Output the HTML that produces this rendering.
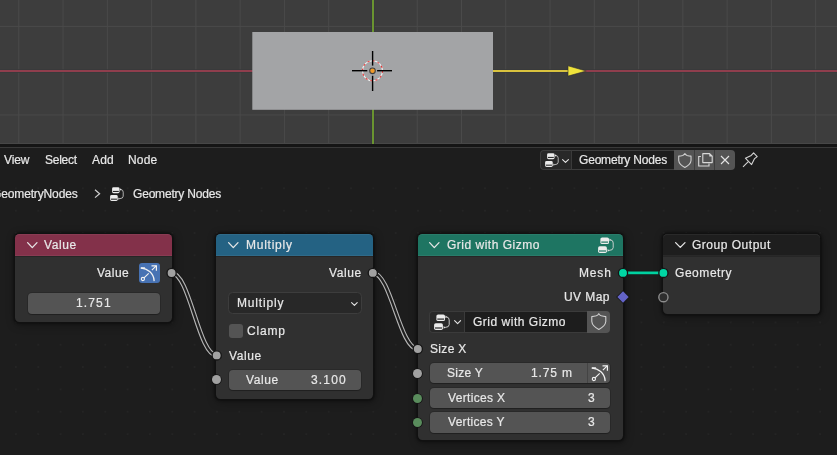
<!DOCTYPE html>
<html><head><meta charset="utf-8">
<style>
*{margin:0;padding:0;box-sizing:border-box}
html,body{width:837px;height:455px;overflow:hidden;background:#1d1d1d;font-family:"Liberation Sans",sans-serif;color:#e0e0e0;font-size:12px}
.abs{position:absolute}
.t{position:absolute;will-change:transform;white-space:nowrap;line-height:14px;font-size:12px;color:#e8e8e8;-webkit-text-stroke:0.2px #e8e8e8}
.node{position:absolute;background:#303030;border-radius:4.5px;box-shadow:0 0 0 1px #111,0 0 2px 1.5px rgba(0,0,0,.3),1px 2px 8px 1px rgba(0,0,0,.35)}
.hdr{position:absolute;left:0;top:0;right:0;height:22px;border-radius:4.5px 4.5px 0 0;box-shadow:0 1px 0 rgba(0,0,0,.2),inset 0 1px 0 rgba(255,255,255,.05),inset 0 -1px 0 rgba(255,255,255,.05)}
.field{position:absolute;background:#545454;border-radius:4px;box-shadow:0 0 0 1px rgba(0,0,0,.14),0 1px 1px rgba(0,0,0,.22)}
.sock{position:absolute;width:9px;height:9px;border-radius:50%;background:#a1a1a1;box-shadow:0 0 0 0.8px #151515}
</style></head>
<body>
<svg class="abs" style="left:0;top:0" width="837" height="144">
  <rect width="837" height="144" fill="#3d3d3d"/>
  <g stroke="#4a4a4a" stroke-width="1"><line x1="18.80" y1="0" x2="18.80" y2="144"/><line x1="63.07" y1="0" x2="63.07" y2="144"/><line x1="107.34" y1="0" x2="107.34" y2="144"/><line x1="151.61" y1="0" x2="151.61" y2="144"/><line x1="195.88" y1="0" x2="195.88" y2="144"/><line x1="240.15" y1="0" x2="240.15" y2="144"/><line x1="284.42" y1="0" x2="284.42" y2="144"/><line x1="328.69" y1="0" x2="328.69" y2="144"/><line x1="417.23" y1="0" x2="417.23" y2="144"/><line x1="461.50" y1="0" x2="461.50" y2="144"/><line x1="505.77" y1="0" x2="505.77" y2="144"/><line x1="550.04" y1="0" x2="550.04" y2="144"/><line x1="594.31" y1="0" x2="594.31" y2="144"/><line x1="638.58" y1="0" x2="638.58" y2="144"/><line x1="682.85" y1="0" x2="682.85" y2="144"/><line x1="727.12" y1="0" x2="727.12" y2="144"/><line x1="771.39" y1="0" x2="771.39" y2="144"/><line x1="815.66" y1="0" x2="815.66" y2="144"/><line x1="0" y1="26.4" x2="837" y2="26.4"/><line x1="0" y1="114.95" x2="837" y2="114.95"/></g>
  <rect x="0" y="143" width="837" height="1" fill="#474747"/>
  <line x1="0" y1="71" x2="837" y2="71" stroke="#383a3b" stroke-width="3.4"/><line x1="0" y1="71" x2="837" y2="71" stroke="#8f3e4d" stroke-width="2"/>
  <line x1="373" y1="0" x2="373" y2="144" stroke="#3a3a3e" stroke-width="3.4"/><line x1="373" y1="0" x2="373" y2="144" stroke="#6a9430" stroke-width="2"/>
  <rect x="252.3" y="32" width="240.7" height="77.8" fill="#a3a4a6"/>
  <line x1="493" y1="71" x2="570" y2="71" stroke="#d9c23e" stroke-width="2"/>
  <polygon points="568,65.8 586.2,71 568,76.1" fill="#efe33b" stroke="#2e2e30" stroke-width="0.6" stroke-linejoin="round"/>
  <circle cx="372.5" cy="70.8" r="10" fill="none" stroke="#f4f4f4" stroke-width="1.05"/>
  <circle cx="372.5" cy="70.8" r="10" fill="none" stroke="#e83030" stroke-width="1.05" stroke-dasharray="2.2 3"/>
  <g stroke="#000" stroke-width="1.4">
    <line x1="352" y1="70.7" x2="367.3" y2="70.7"/>
    <line x1="377.1" y1="70.7" x2="392" y2="70.7"/>
    <line x1="372.6" y1="51" x2="372.6" y2="65.6"/>
    <line x1="372.6" y1="75.8" x2="372.6" y2="91"/>
  </g>
  <circle cx="372.5" cy="70.8" r="2.8" fill="#f09a2a" stroke="#404040" stroke-width="1.1"/>
</svg>
<div class="abs" style="left:0;top:144px;width:837px;height:3px;background:#151515"></div>
<div class="abs" style="left:0;top:147px;width:837px;height:1px;background:#393939"></div>
<svg class="abs" style="left:0;top:0" width="837" height="455"><g fill="#242424"><rect x="14.9" y="187.3" width="2" height="2"/><rect x="14.9" y="209.7" width="2" height="2"/><rect x="14.9" y="232.0" width="2" height="2"/><rect x="14.9" y="254.3" width="2" height="2"/><rect x="14.9" y="276.7" width="2" height="2"/><rect x="14.9" y="299.0" width="2" height="2"/><rect x="14.9" y="321.4" width="2" height="2"/><rect x="14.9" y="343.7" width="2" height="2"/><rect x="14.9" y="366.0" width="2" height="2"/><rect x="14.9" y="388.4" width="2" height="2"/><rect x="14.9" y="410.7" width="2" height="2"/><rect x="14.9" y="433.1" width="2" height="2"/><rect x="37.2" y="187.3" width="2" height="2"/><rect x="37.2" y="209.7" width="2" height="2"/><rect x="37.2" y="232.0" width="2" height="2"/><rect x="37.2" y="254.3" width="2" height="2"/><rect x="37.2" y="276.7" width="2" height="2"/><rect x="37.2" y="299.0" width="2" height="2"/><rect x="37.2" y="321.4" width="2" height="2"/><rect x="37.2" y="343.7" width="2" height="2"/><rect x="37.2" y="366.0" width="2" height="2"/><rect x="37.2" y="388.4" width="2" height="2"/><rect x="37.2" y="410.7" width="2" height="2"/><rect x="37.2" y="433.1" width="2" height="2"/><rect x="59.6" y="187.3" width="2" height="2"/><rect x="59.6" y="209.7" width="2" height="2"/><rect x="59.6" y="232.0" width="2" height="2"/><rect x="59.6" y="254.3" width="2" height="2"/><rect x="59.6" y="276.7" width="2" height="2"/><rect x="59.6" y="299.0" width="2" height="2"/><rect x="59.6" y="321.4" width="2" height="2"/><rect x="59.6" y="343.7" width="2" height="2"/><rect x="59.6" y="366.0" width="2" height="2"/><rect x="59.6" y="388.4" width="2" height="2"/><rect x="59.6" y="410.7" width="2" height="2"/><rect x="59.6" y="433.1" width="2" height="2"/><rect x="81.9" y="187.3" width="2" height="2"/><rect x="81.9" y="209.7" width="2" height="2"/><rect x="81.9" y="232.0" width="2" height="2"/><rect x="81.9" y="254.3" width="2" height="2"/><rect x="81.9" y="276.7" width="2" height="2"/><rect x="81.9" y="299.0" width="2" height="2"/><rect x="81.9" y="321.4" width="2" height="2"/><rect x="81.9" y="343.7" width="2" height="2"/><rect x="81.9" y="366.0" width="2" height="2"/><rect x="81.9" y="388.4" width="2" height="2"/><rect x="81.9" y="410.7" width="2" height="2"/><rect x="81.9" y="433.1" width="2" height="2"/><rect x="104.3" y="187.3" width="2" height="2"/><rect x="104.3" y="209.7" width="2" height="2"/><rect x="104.3" y="232.0" width="2" height="2"/><rect x="104.3" y="254.3" width="2" height="2"/><rect x="104.3" y="276.7" width="2" height="2"/><rect x="104.3" y="299.0" width="2" height="2"/><rect x="104.3" y="321.4" width="2" height="2"/><rect x="104.3" y="343.7" width="2" height="2"/><rect x="104.3" y="366.0" width="2" height="2"/><rect x="104.3" y="388.4" width="2" height="2"/><rect x="104.3" y="410.7" width="2" height="2"/><rect x="104.3" y="433.1" width="2" height="2"/><rect x="126.6" y="187.3" width="2" height="2"/><rect x="126.6" y="209.7" width="2" height="2"/><rect x="126.6" y="232.0" width="2" height="2"/><rect x="126.6" y="254.3" width="2" height="2"/><rect x="126.6" y="276.7" width="2" height="2"/><rect x="126.6" y="299.0" width="2" height="2"/><rect x="126.6" y="321.4" width="2" height="2"/><rect x="126.6" y="343.7" width="2" height="2"/><rect x="126.6" y="366.0" width="2" height="2"/><rect x="126.6" y="388.4" width="2" height="2"/><rect x="126.6" y="410.7" width="2" height="2"/><rect x="126.6" y="433.1" width="2" height="2"/><rect x="148.9" y="187.3" width="2" height="2"/><rect x="148.9" y="209.7" width="2" height="2"/><rect x="148.9" y="232.0" width="2" height="2"/><rect x="148.9" y="254.3" width="2" height="2"/><rect x="148.9" y="276.7" width="2" height="2"/><rect x="148.9" y="299.0" width="2" height="2"/><rect x="148.9" y="321.4" width="2" height="2"/><rect x="148.9" y="343.7" width="2" height="2"/><rect x="148.9" y="366.0" width="2" height="2"/><rect x="148.9" y="388.4" width="2" height="2"/><rect x="148.9" y="410.7" width="2" height="2"/><rect x="148.9" y="433.1" width="2" height="2"/><rect x="171.3" y="187.3" width="2" height="2"/><rect x="171.3" y="209.7" width="2" height="2"/><rect x="171.3" y="232.0" width="2" height="2"/><rect x="171.3" y="254.3" width="2" height="2"/><rect x="171.3" y="276.7" width="2" height="2"/><rect x="171.3" y="299.0" width="2" height="2"/><rect x="171.3" y="321.4" width="2" height="2"/><rect x="171.3" y="343.7" width="2" height="2"/><rect x="171.3" y="366.0" width="2" height="2"/><rect x="171.3" y="388.4" width="2" height="2"/><rect x="171.3" y="410.7" width="2" height="2"/><rect x="171.3" y="433.1" width="2" height="2"/><rect x="193.6" y="187.3" width="2" height="2"/><rect x="193.6" y="209.7" width="2" height="2"/><rect x="193.6" y="232.0" width="2" height="2"/><rect x="193.6" y="254.3" width="2" height="2"/><rect x="193.6" y="276.7" width="2" height="2"/><rect x="193.6" y="299.0" width="2" height="2"/><rect x="193.6" y="321.4" width="2" height="2"/><rect x="193.6" y="343.7" width="2" height="2"/><rect x="193.6" y="366.0" width="2" height="2"/><rect x="193.6" y="388.4" width="2" height="2"/><rect x="193.6" y="410.7" width="2" height="2"/><rect x="193.6" y="433.1" width="2" height="2"/><rect x="216.0" y="187.3" width="2" height="2"/><rect x="216.0" y="209.7" width="2" height="2"/><rect x="216.0" y="232.0" width="2" height="2"/><rect x="216.0" y="254.3" width="2" height="2"/><rect x="216.0" y="276.7" width="2" height="2"/><rect x="216.0" y="299.0" width="2" height="2"/><rect x="216.0" y="321.4" width="2" height="2"/><rect x="216.0" y="343.7" width="2" height="2"/><rect x="216.0" y="366.0" width="2" height="2"/><rect x="216.0" y="388.4" width="2" height="2"/><rect x="216.0" y="410.7" width="2" height="2"/><rect x="216.0" y="433.1" width="2" height="2"/><rect x="238.3" y="187.3" width="2" height="2"/><rect x="238.3" y="209.7" width="2" height="2"/><rect x="238.3" y="232.0" width="2" height="2"/><rect x="238.3" y="254.3" width="2" height="2"/><rect x="238.3" y="276.7" width="2" height="2"/><rect x="238.3" y="299.0" width="2" height="2"/><rect x="238.3" y="321.4" width="2" height="2"/><rect x="238.3" y="343.7" width="2" height="2"/><rect x="238.3" y="366.0" width="2" height="2"/><rect x="238.3" y="388.4" width="2" height="2"/><rect x="238.3" y="410.7" width="2" height="2"/><rect x="238.3" y="433.1" width="2" height="2"/><rect x="260.6" y="187.3" width="2" height="2"/><rect x="260.6" y="209.7" width="2" height="2"/><rect x="260.6" y="232.0" width="2" height="2"/><rect x="260.6" y="254.3" width="2" height="2"/><rect x="260.6" y="276.7" width="2" height="2"/><rect x="260.6" y="299.0" width="2" height="2"/><rect x="260.6" y="321.4" width="2" height="2"/><rect x="260.6" y="343.7" width="2" height="2"/><rect x="260.6" y="366.0" width="2" height="2"/><rect x="260.6" y="388.4" width="2" height="2"/><rect x="260.6" y="410.7" width="2" height="2"/><rect x="260.6" y="433.1" width="2" height="2"/><rect x="283.0" y="187.3" width="2" height="2"/><rect x="283.0" y="209.7" width="2" height="2"/><rect x="283.0" y="232.0" width="2" height="2"/><rect x="283.0" y="254.3" width="2" height="2"/><rect x="283.0" y="276.7" width="2" height="2"/><rect x="283.0" y="299.0" width="2" height="2"/><rect x="283.0" y="321.4" width="2" height="2"/><rect x="283.0" y="343.7" width="2" height="2"/><rect x="283.0" y="366.0" width="2" height="2"/><rect x="283.0" y="388.4" width="2" height="2"/><rect x="283.0" y="410.7" width="2" height="2"/><rect x="283.0" y="433.1" width="2" height="2"/><rect x="305.3" y="187.3" width="2" height="2"/><rect x="305.3" y="209.7" width="2" height="2"/><rect x="305.3" y="232.0" width="2" height="2"/><rect x="305.3" y="254.3" width="2" height="2"/><rect x="305.3" y="276.7" width="2" height="2"/><rect x="305.3" y="299.0" width="2" height="2"/><rect x="305.3" y="321.4" width="2" height="2"/><rect x="305.3" y="343.7" width="2" height="2"/><rect x="305.3" y="366.0" width="2" height="2"/><rect x="305.3" y="388.4" width="2" height="2"/><rect x="305.3" y="410.7" width="2" height="2"/><rect x="305.3" y="433.1" width="2" height="2"/><rect x="327.7" y="187.3" width="2" height="2"/><rect x="327.7" y="209.7" width="2" height="2"/><rect x="327.7" y="232.0" width="2" height="2"/><rect x="327.7" y="254.3" width="2" height="2"/><rect x="327.7" y="276.7" width="2" height="2"/><rect x="327.7" y="299.0" width="2" height="2"/><rect x="327.7" y="321.4" width="2" height="2"/><rect x="327.7" y="343.7" width="2" height="2"/><rect x="327.7" y="366.0" width="2" height="2"/><rect x="327.7" y="388.4" width="2" height="2"/><rect x="327.7" y="410.7" width="2" height="2"/><rect x="327.7" y="433.1" width="2" height="2"/><rect x="350.0" y="187.3" width="2" height="2"/><rect x="350.0" y="209.7" width="2" height="2"/><rect x="350.0" y="232.0" width="2" height="2"/><rect x="350.0" y="254.3" width="2" height="2"/><rect x="350.0" y="276.7" width="2" height="2"/><rect x="350.0" y="299.0" width="2" height="2"/><rect x="350.0" y="321.4" width="2" height="2"/><rect x="350.0" y="343.7" width="2" height="2"/><rect x="350.0" y="366.0" width="2" height="2"/><rect x="350.0" y="388.4" width="2" height="2"/><rect x="350.0" y="410.7" width="2" height="2"/><rect x="350.0" y="433.1" width="2" height="2"/><rect x="372.3" y="187.3" width="2" height="2"/><rect x="372.3" y="209.7" width="2" height="2"/><rect x="372.3" y="232.0" width="2" height="2"/><rect x="372.3" y="254.3" width="2" height="2"/><rect x="372.3" y="276.7" width="2" height="2"/><rect x="372.3" y="299.0" width="2" height="2"/><rect x="372.3" y="321.4" width="2" height="2"/><rect x="372.3" y="343.7" width="2" height="2"/><rect x="372.3" y="366.0" width="2" height="2"/><rect x="372.3" y="388.4" width="2" height="2"/><rect x="372.3" y="410.7" width="2" height="2"/><rect x="372.3" y="433.1" width="2" height="2"/><rect x="394.7" y="187.3" width="2" height="2"/><rect x="394.7" y="209.7" width="2" height="2"/><rect x="394.7" y="232.0" width="2" height="2"/><rect x="394.7" y="254.3" width="2" height="2"/><rect x="394.7" y="276.7" width="2" height="2"/><rect x="394.7" y="299.0" width="2" height="2"/><rect x="394.7" y="321.4" width="2" height="2"/><rect x="394.7" y="343.7" width="2" height="2"/><rect x="394.7" y="366.0" width="2" height="2"/><rect x="394.7" y="388.4" width="2" height="2"/><rect x="394.7" y="410.7" width="2" height="2"/><rect x="394.7" y="433.1" width="2" height="2"/><rect x="417.0" y="187.3" width="2" height="2"/><rect x="417.0" y="209.7" width="2" height="2"/><rect x="417.0" y="232.0" width="2" height="2"/><rect x="417.0" y="254.3" width="2" height="2"/><rect x="417.0" y="276.7" width="2" height="2"/><rect x="417.0" y="299.0" width="2" height="2"/><rect x="417.0" y="321.4" width="2" height="2"/><rect x="417.0" y="343.7" width="2" height="2"/><rect x="417.0" y="366.0" width="2" height="2"/><rect x="417.0" y="388.4" width="2" height="2"/><rect x="417.0" y="410.7" width="2" height="2"/><rect x="417.0" y="433.1" width="2" height="2"/><rect x="439.4" y="187.3" width="2" height="2"/><rect x="439.4" y="209.7" width="2" height="2"/><rect x="439.4" y="232.0" width="2" height="2"/><rect x="439.4" y="254.3" width="2" height="2"/><rect x="439.4" y="276.7" width="2" height="2"/><rect x="439.4" y="299.0" width="2" height="2"/><rect x="439.4" y="321.4" width="2" height="2"/><rect x="439.4" y="343.7" width="2" height="2"/><rect x="439.4" y="366.0" width="2" height="2"/><rect x="439.4" y="388.4" width="2" height="2"/><rect x="439.4" y="410.7" width="2" height="2"/><rect x="439.4" y="433.1" width="2" height="2"/><rect x="461.7" y="187.3" width="2" height="2"/><rect x="461.7" y="209.7" width="2" height="2"/><rect x="461.7" y="232.0" width="2" height="2"/><rect x="461.7" y="254.3" width="2" height="2"/><rect x="461.7" y="276.7" width="2" height="2"/><rect x="461.7" y="299.0" width="2" height="2"/><rect x="461.7" y="321.4" width="2" height="2"/><rect x="461.7" y="343.7" width="2" height="2"/><rect x="461.7" y="366.0" width="2" height="2"/><rect x="461.7" y="388.4" width="2" height="2"/><rect x="461.7" y="410.7" width="2" height="2"/><rect x="461.7" y="433.1" width="2" height="2"/><rect x="484.0" y="187.3" width="2" height="2"/><rect x="484.0" y="209.7" width="2" height="2"/><rect x="484.0" y="232.0" width="2" height="2"/><rect x="484.0" y="254.3" width="2" height="2"/><rect x="484.0" y="276.7" width="2" height="2"/><rect x="484.0" y="299.0" width="2" height="2"/><rect x="484.0" y="321.4" width="2" height="2"/><rect x="484.0" y="343.7" width="2" height="2"/><rect x="484.0" y="366.0" width="2" height="2"/><rect x="484.0" y="388.4" width="2" height="2"/><rect x="484.0" y="410.7" width="2" height="2"/><rect x="484.0" y="433.1" width="2" height="2"/><rect x="506.4" y="187.3" width="2" height="2"/><rect x="506.4" y="209.7" width="2" height="2"/><rect x="506.4" y="232.0" width="2" height="2"/><rect x="506.4" y="254.3" width="2" height="2"/><rect x="506.4" y="276.7" width="2" height="2"/><rect x="506.4" y="299.0" width="2" height="2"/><rect x="506.4" y="321.4" width="2" height="2"/><rect x="506.4" y="343.7" width="2" height="2"/><rect x="506.4" y="366.0" width="2" height="2"/><rect x="506.4" y="388.4" width="2" height="2"/><rect x="506.4" y="410.7" width="2" height="2"/><rect x="506.4" y="433.1" width="2" height="2"/><rect x="528.7" y="187.3" width="2" height="2"/><rect x="528.7" y="209.7" width="2" height="2"/><rect x="528.7" y="232.0" width="2" height="2"/><rect x="528.7" y="254.3" width="2" height="2"/><rect x="528.7" y="276.7" width="2" height="2"/><rect x="528.7" y="299.0" width="2" height="2"/><rect x="528.7" y="321.4" width="2" height="2"/><rect x="528.7" y="343.7" width="2" height="2"/><rect x="528.7" y="366.0" width="2" height="2"/><rect x="528.7" y="388.4" width="2" height="2"/><rect x="528.7" y="410.7" width="2" height="2"/><rect x="528.7" y="433.1" width="2" height="2"/><rect x="551.1" y="187.3" width="2" height="2"/><rect x="551.1" y="209.7" width="2" height="2"/><rect x="551.1" y="232.0" width="2" height="2"/><rect x="551.1" y="254.3" width="2" height="2"/><rect x="551.1" y="276.7" width="2" height="2"/><rect x="551.1" y="299.0" width="2" height="2"/><rect x="551.1" y="321.4" width="2" height="2"/><rect x="551.1" y="343.7" width="2" height="2"/><rect x="551.1" y="366.0" width="2" height="2"/><rect x="551.1" y="388.4" width="2" height="2"/><rect x="551.1" y="410.7" width="2" height="2"/><rect x="551.1" y="433.1" width="2" height="2"/><rect x="573.4" y="187.3" width="2" height="2"/><rect x="573.4" y="209.7" width="2" height="2"/><rect x="573.4" y="232.0" width="2" height="2"/><rect x="573.4" y="254.3" width="2" height="2"/><rect x="573.4" y="276.7" width="2" height="2"/><rect x="573.4" y="299.0" width="2" height="2"/><rect x="573.4" y="321.4" width="2" height="2"/><rect x="573.4" y="343.7" width="2" height="2"/><rect x="573.4" y="366.0" width="2" height="2"/><rect x="573.4" y="388.4" width="2" height="2"/><rect x="573.4" y="410.7" width="2" height="2"/><rect x="573.4" y="433.1" width="2" height="2"/><rect x="595.7" y="187.3" width="2" height="2"/><rect x="595.7" y="209.7" width="2" height="2"/><rect x="595.7" y="232.0" width="2" height="2"/><rect x="595.7" y="254.3" width="2" height="2"/><rect x="595.7" y="276.7" width="2" height="2"/><rect x="595.7" y="299.0" width="2" height="2"/><rect x="595.7" y="321.4" width="2" height="2"/><rect x="595.7" y="343.7" width="2" height="2"/><rect x="595.7" y="366.0" width="2" height="2"/><rect x="595.7" y="388.4" width="2" height="2"/><rect x="595.7" y="410.7" width="2" height="2"/><rect x="595.7" y="433.1" width="2" height="2"/><rect x="618.1" y="187.3" width="2" height="2"/><rect x="618.1" y="209.7" width="2" height="2"/><rect x="618.1" y="232.0" width="2" height="2"/><rect x="618.1" y="254.3" width="2" height="2"/><rect x="618.1" y="276.7" width="2" height="2"/><rect x="618.1" y="299.0" width="2" height="2"/><rect x="618.1" y="321.4" width="2" height="2"/><rect x="618.1" y="343.7" width="2" height="2"/><rect x="618.1" y="366.0" width="2" height="2"/><rect x="618.1" y="388.4" width="2" height="2"/><rect x="618.1" y="410.7" width="2" height="2"/><rect x="618.1" y="433.1" width="2" height="2"/><rect x="640.4" y="187.3" width="2" height="2"/><rect x="640.4" y="209.7" width="2" height="2"/><rect x="640.4" y="232.0" width="2" height="2"/><rect x="640.4" y="254.3" width="2" height="2"/><rect x="640.4" y="276.7" width="2" height="2"/><rect x="640.4" y="299.0" width="2" height="2"/><rect x="640.4" y="321.4" width="2" height="2"/><rect x="640.4" y="343.7" width="2" height="2"/><rect x="640.4" y="366.0" width="2" height="2"/><rect x="640.4" y="388.4" width="2" height="2"/><rect x="640.4" y="410.7" width="2" height="2"/><rect x="640.4" y="433.1" width="2" height="2"/><rect x="662.8" y="187.3" width="2" height="2"/><rect x="662.8" y="209.7" width="2" height="2"/><rect x="662.8" y="232.0" width="2" height="2"/><rect x="662.8" y="254.3" width="2" height="2"/><rect x="662.8" y="276.7" width="2" height="2"/><rect x="662.8" y="299.0" width="2" height="2"/><rect x="662.8" y="321.4" width="2" height="2"/><rect x="662.8" y="343.7" width="2" height="2"/><rect x="662.8" y="366.0" width="2" height="2"/><rect x="662.8" y="388.4" width="2" height="2"/><rect x="662.8" y="410.7" width="2" height="2"/><rect x="662.8" y="433.1" width="2" height="2"/><rect x="685.1" y="187.3" width="2" height="2"/><rect x="685.1" y="209.7" width="2" height="2"/><rect x="685.1" y="232.0" width="2" height="2"/><rect x="685.1" y="254.3" width="2" height="2"/><rect x="685.1" y="276.7" width="2" height="2"/><rect x="685.1" y="299.0" width="2" height="2"/><rect x="685.1" y="321.4" width="2" height="2"/><rect x="685.1" y="343.7" width="2" height="2"/><rect x="685.1" y="366.0" width="2" height="2"/><rect x="685.1" y="388.4" width="2" height="2"/><rect x="685.1" y="410.7" width="2" height="2"/><rect x="685.1" y="433.1" width="2" height="2"/><rect x="707.4" y="187.3" width="2" height="2"/><rect x="707.4" y="209.7" width="2" height="2"/><rect x="707.4" y="232.0" width="2" height="2"/><rect x="707.4" y="254.3" width="2" height="2"/><rect x="707.4" y="276.7" width="2" height="2"/><rect x="707.4" y="299.0" width="2" height="2"/><rect x="707.4" y="321.4" width="2" height="2"/><rect x="707.4" y="343.7" width="2" height="2"/><rect x="707.4" y="366.0" width="2" height="2"/><rect x="707.4" y="388.4" width="2" height="2"/><rect x="707.4" y="410.7" width="2" height="2"/><rect x="707.4" y="433.1" width="2" height="2"/><rect x="729.8" y="187.3" width="2" height="2"/><rect x="729.8" y="209.7" width="2" height="2"/><rect x="729.8" y="232.0" width="2" height="2"/><rect x="729.8" y="254.3" width="2" height="2"/><rect x="729.8" y="276.7" width="2" height="2"/><rect x="729.8" y="299.0" width="2" height="2"/><rect x="729.8" y="321.4" width="2" height="2"/><rect x="729.8" y="343.7" width="2" height="2"/><rect x="729.8" y="366.0" width="2" height="2"/><rect x="729.8" y="388.4" width="2" height="2"/><rect x="729.8" y="410.7" width="2" height="2"/><rect x="729.8" y="433.1" width="2" height="2"/><rect x="752.1" y="187.3" width="2" height="2"/><rect x="752.1" y="209.7" width="2" height="2"/><rect x="752.1" y="232.0" width="2" height="2"/><rect x="752.1" y="254.3" width="2" height="2"/><rect x="752.1" y="276.7" width="2" height="2"/><rect x="752.1" y="299.0" width="2" height="2"/><rect x="752.1" y="321.4" width="2" height="2"/><rect x="752.1" y="343.7" width="2" height="2"/><rect x="752.1" y="366.0" width="2" height="2"/><rect x="752.1" y="388.4" width="2" height="2"/><rect x="752.1" y="410.7" width="2" height="2"/><rect x="752.1" y="433.1" width="2" height="2"/><rect x="774.5" y="187.3" width="2" height="2"/><rect x="774.5" y="209.7" width="2" height="2"/><rect x="774.5" y="232.0" width="2" height="2"/><rect x="774.5" y="254.3" width="2" height="2"/><rect x="774.5" y="276.7" width="2" height="2"/><rect x="774.5" y="299.0" width="2" height="2"/><rect x="774.5" y="321.4" width="2" height="2"/><rect x="774.5" y="343.7" width="2" height="2"/><rect x="774.5" y="366.0" width="2" height="2"/><rect x="774.5" y="388.4" width="2" height="2"/><rect x="774.5" y="410.7" width="2" height="2"/><rect x="774.5" y="433.1" width="2" height="2"/><rect x="796.8" y="187.3" width="2" height="2"/><rect x="796.8" y="209.7" width="2" height="2"/><rect x="796.8" y="232.0" width="2" height="2"/><rect x="796.8" y="254.3" width="2" height="2"/><rect x="796.8" y="276.7" width="2" height="2"/><rect x="796.8" y="299.0" width="2" height="2"/><rect x="796.8" y="321.4" width="2" height="2"/><rect x="796.8" y="343.7" width="2" height="2"/><rect x="796.8" y="366.0" width="2" height="2"/><rect x="796.8" y="388.4" width="2" height="2"/><rect x="796.8" y="410.7" width="2" height="2"/><rect x="796.8" y="433.1" width="2" height="2"/><rect x="819.1" y="187.3" width="2" height="2"/><rect x="819.1" y="209.7" width="2" height="2"/><rect x="819.1" y="232.0" width="2" height="2"/><rect x="819.1" y="254.3" width="2" height="2"/><rect x="819.1" y="276.7" width="2" height="2"/><rect x="819.1" y="299.0" width="2" height="2"/><rect x="819.1" y="321.4" width="2" height="2"/><rect x="819.1" y="343.7" width="2" height="2"/><rect x="819.1" y="366.0" width="2" height="2"/><rect x="819.1" y="388.4" width="2" height="2"/><rect x="819.1" y="410.7" width="2" height="2"/><rect x="819.1" y="433.1" width="2" height="2"/></g></svg>

<!-- header widget -->
<div class="abs" style="left:540px;top:150px;width:31px;height:20px;background:#282828;border:1px solid #3d3d3d;border-right:none;border-radius:4px 0 0 4px"></div>
<div class="abs" style="left:571px;top:150px;width:103.2px;height:20px;background:#1d1d1d;border:1px solid #3d3d3d;border-left:1px solid #3a3a3a;border-right:none"></div>
<div class="abs" style="left:674.2px;top:150px;width:60.5px;height:20px;background:#545454;border-radius:0 4px 4px 0"></div>
<div class="abs" style="left:694.2px;top:150px;width:1px;height:20px;background:#3d3d3d"></div>
<div class="abs" style="left:714.3px;top:150px;width:1px;height:20px;background:#3d3d3d"></div>
<svg class="abs" style="left:545.2px;top:152.9px" width="13.92" height="13.92" viewBox="0 0 16 16">
<rect x="2.4" y="0.4" width="8.6" height="6.7" rx="1.7" fill="#ececec"/>
<rect x="3.3" y="4.5" width="6.8" height="1.2" fill="#282828"/>
<rect x="0.1" y="9.3" width="8.8" height="6.7" rx="1.7" fill="#ececec"/>
<rect x="1.0" y="13.4" width="7" height="1.2" fill="#282828"/>
<path d="M12.6 2.9 Q15.2 3.3 15.2 6 V10.6 Q15.2 13.3 11.2 13.4" fill="none" stroke="#d8d8d8" stroke-width="0.9"/>
<path d="M11.4 1.5 L13.4 2.9 L11.4 4.3Z M9.6 12 L9.6 14.8 L11.6 13.4Z" fill="#dcdcdc"/>
</svg>
<svg class="abs" style="left:562.2px;top:158.8px;overflow:visible" width="7" height="4"><path d="M0.6 0.6 L3.5 3.4 L6.4 0.6" fill="none" stroke="#e6e6e6" stroke-width="1.1" stroke-linecap="round" stroke-linejoin="round"/></svg>
<svg class="abs" style="left:678.1px;top:152.9px;overflow:visible" width="14.08" height="14.96" viewBox="0 0 16 17">
<path d="M7.8 0.7 Q6.8 2.3 5.3 2.8 Q3 3.5 0.8 3.6 V8.5 Q1.2 13 7.8 16.4 Q14.4 13 14.8 8.5 V3.6 Q12.6 3.5 10.3 2.8 Q8.8 2.3 7.8 0.7 Z" fill="none" stroke="#cfcfcf" stroke-width="1.25" stroke-linejoin="round"/>
</svg>
<svg class="abs" style="left:0;top:0" width="837" height="200">
<path d="M702.8 153.6 H709.6 L712.2 156.2 V162.6 H702.8 Z" fill="none" stroke="#d8d8d8" stroke-width="1.1" stroke-linejoin="round"/>
<path d="M709.3 153.4 V156.5 H712.4 Z" fill="#d8d8d8"/>
<path d="M700.9 156.5 H698.7 V166 H709 V163.6" fill="none" stroke="#d8d8d8" stroke-width="1.1"/>
<path d="M721 156 L729 164 M729 156 L721 164" stroke="#e4e4e4" stroke-width="1.1"/>
<path d="M753.6 152.8 L757.2 156.6 L754.6 158.6 L751.6 164.6 L745.4 158.2 L751.2 155.4 Z" fill="none" stroke="#d4d4d4" stroke-width="1.1" stroke-linejoin="round"/>
<path d="M748.3 161.7 L743 166.8" stroke="#d4d4d4" stroke-width="1.1"/>
</svg>

<!-- breadcrumb -->
<svg class="abs" style="left:94px;top:188.5px" width="7" height="10"><path d="M1 0.8 L5.6 4.7 L1 8.6" fill="none" stroke="#d0d0d0" stroke-width="1.2"/></svg>
<svg class="abs" style="left:109.6px;top:186.8px" width="13.92" height="13.92" viewBox="0 0 16 16">
<rect x="2.4" y="0.4" width="8.6" height="6.7" rx="1.7" fill="#ececec"/>
<rect x="3.3" y="4.5" width="6.8" height="1.2" fill="#1d1d1d"/>
<rect x="0.1" y="9.3" width="8.8" height="6.7" rx="1.7" fill="#ececec"/>
<rect x="1.0" y="13.4" width="7" height="1.2" fill="#1d1d1d"/>
<path d="M12.6 2.9 Q15.2 3.3 15.2 6 V10.6 Q15.2 13.3 11.2 13.4" fill="none" stroke="#d8d8d8" stroke-width="0.9"/>
<path d="M11.4 1.5 L13.4 2.9 L11.4 4.3Z M9.6 12 L9.6 14.8 L11.6 13.4Z" fill="#dcdcdc"/>
</svg>

<!-- Value node -->
<div class="node" style="left:15.4px;top:234px;width:156.6px;height:88px">
  <div class="hdr" style="background:#83314a"></div>
</div>
<svg class="abs" style="left:27.2px;top:242px;overflow:visible" width="10.6" height="6.2"><path d="M0.6 0.6 L5.3 5.6000000000000005 L10.0 0.6" fill="none" stroke="#e6e6e6" stroke-width="1.3" stroke-linecap="round" stroke-linejoin="round"/></svg>
<div class="abs" style="left:139.1px;top:262.9px;width:20.8px;height:20.1px;background:#4772b3;border-radius:3px"></div>
<svg class="abs" style="left:141px;top:264.8px;overflow:visible" width="17" height="17" viewBox="0 0 17 17">
<path d="M0.3 3.1 C6 3.4 12.6 8 13.1 15.6" fill="none" stroke="#f2f2f2" stroke-width="1.3" stroke-linecap="round"/>
<path d="M0.4 2.9 C1.6 2.9 2.6 3 3.4 3.1" fill="none" stroke="#f2f2f2" stroke-width="1.5" stroke-linecap="round"/>
<path d="M3 12.9 L7.7 8.4 M10.9 5.2 L15.2 0.95" fill="none" stroke="#f2f2f2" stroke-width="1.15"/>
<path d="M10.5 0.8 H15.4 V5.8" fill="none" stroke="#f2f2f2" stroke-width="1.2"/>
<circle cx="1.9" cy="14" r="1.6" fill="none" stroke="#f2f2f2" stroke-width="1.1"/>
</svg>
<div class="field" style="left:27.8px;top:292.8px;width:132.5px;height:21px"></div>

<!-- Multiply node -->
<div class="node" style="left:216.4px;top:234px;width:156.9px;height:165px">
  <div class="hdr" style="background:#246283"></div>
</div>
<svg class="abs" style="left:228.2px;top:242px;overflow:visible" width="10.6" height="6.2"><path d="M0.6 0.6 L5.3 5.6000000000000005 L10.0 0.6" fill="none" stroke="#e6e6e6" stroke-width="1.3" stroke-linecap="round" stroke-linejoin="round"/></svg>
<div class="abs" style="left:228.2px;top:292px;width:133.6px;height:21.8px;background:#282828;border:1px solid #3d3d3d;border-radius:4.5px"></div>
<svg class="abs" style="left:351.3px;top:302px;overflow:visible" width="6.8" height="4"><path d="M0.6 0.6 L3.4 3.4 L6.2 0.6" fill="none" stroke="#e6e6e6" stroke-width="1.1" stroke-linecap="round" stroke-linejoin="round"/></svg>
<div class="abs" style="left:228.8px;top:323.7px;width:14.6px;height:14.6px;background:#545454;border-radius:3px"></div>
<div class="field" style="left:228.7px;top:369.8px;width:132.7px;height:20.4px"></div>
<div class="sock" style="left:212.2px;top:375.4px"></div>

<!-- Grid with Gizmo node -->
<div class="node" style="left:418px;top:234px;width:205px;height:206px">
  <div class="hdr" style="background:#1e7562"></div>
</div>
<svg class="abs" style="left:429.4px;top:242px;overflow:visible" width="10.6" height="6.2"><path d="M0.6 0.6 L5.3 5.6000000000000005 L10.0 0.6" fill="none" stroke="#e6e6e6" stroke-width="1.3" stroke-linecap="round" stroke-linejoin="round"/></svg>
<svg class="abs" style="left:598px;top:237px" width="16.0" height="16.0" viewBox="0 0 16 16">
<rect x="2.4" y="0.4" width="8.6" height="6.7" rx="1.7" fill="#ececec"/>
<rect x="3.3" y="4.5" width="6.8" height="1.2" fill="#1e7562"/>
<rect x="0.1" y="9.3" width="8.8" height="6.7" rx="1.7" fill="#ececec"/>
<rect x="1.0" y="13.4" width="7" height="1.2" fill="#1e7562"/>
<path d="M12.6 2.9 Q15.2 3.3 15.2 6 V10.6 Q15.2 13.3 11.2 13.4" fill="none" stroke="#d8d8d8" stroke-width="0.9"/>
<path d="M11.4 1.5 L13.4 2.9 L11.4 4.3Z M9.6 12 L9.6 14.8 L11.6 13.4Z" fill="#dcdcdc"/>
</svg>
<div class="abs" style="left:429.4px;top:311px;width:34.6px;height:22px;background:#282828;border:1px solid #3b3b3b;border-right:none;border-radius:4px 0 0 4px"></div>
<div class="abs" style="left:464px;top:311px;width:123.3px;height:22px;background:#1d1d1d;border:1px solid #3b3b3b;border-right:none"></div>
<div class="abs" style="left:587.3px;top:311px;width:22.7px;height:22px;background:#545454;border-radius:0 4px 4px 0"></div>
<svg class="abs" style="left:434px;top:313.8px" width="16.0" height="16.0" viewBox="0 0 16 16">
<rect x="2.4" y="0.4" width="8.6" height="6.7" rx="1.7" fill="#ececec"/>
<rect x="3.3" y="4.5" width="6.8" height="1.2" fill="#282828"/>
<rect x="0.1" y="9.3" width="8.8" height="6.7" rx="1.7" fill="#ececec"/>
<rect x="1.0" y="13.4" width="7" height="1.2" fill="#282828"/>
<path d="M12.6 2.9 Q15.2 3.3 15.2 6 V10.6 Q15.2 13.3 11.2 13.4" fill="none" stroke="#d8d8d8" stroke-width="0.9"/>
<path d="M11.4 1.5 L13.4 2.9 L11.4 4.3Z M9.6 12 L9.6 14.8 L11.6 13.4Z" fill="#dcdcdc"/>
</svg>
<svg class="abs" style="left:454px;top:320.4px;overflow:visible" width="7.2" height="4.3"><path d="M0.6 0.6 L3.6 3.6999999999999997 L6.6000000000000005 0.6" fill="none" stroke="#e6e6e6" stroke-width="1.1" stroke-linecap="round" stroke-linejoin="round"/></svg>
<svg class="abs" style="left:590.6px;top:313.4px;overflow:visible" width="16.0" height="17.0" viewBox="0 0 16 17">
<path d="M7.8 0.7 Q6.8 2.3 5.3 2.8 Q3 3.5 0.8 3.6 V8.5 Q1.2 13 7.8 16.4 Q14.4 13 14.8 8.5 V3.6 Q12.6 3.5 10.3 2.8 Q8.8 2.3 7.8 0.7 Z" fill="none" stroke="#cfcfcf" stroke-width="1.10" stroke-linejoin="round"/>
</svg>
<div class="field" style="left:429.8px;top:363px;width:180.2px;height:20px"></div>
<div class="abs" style="left:587.1px;top:363px;width:1px;height:20px;background:#444"></div>
<svg class="abs" style="left:592px;top:365px;overflow:visible" width="17" height="17" viewBox="0 0 17 17">
<path d="M0.3 3.1 C6 3.4 12.6 8 13.1 15.6" fill="none" stroke="#f2f2f2" stroke-width="1.3" stroke-linecap="round"/>
<path d="M0.4 2.9 C1.6 2.9 2.6 3 3.4 3.1" fill="none" stroke="#f2f2f2" stroke-width="1.5" stroke-linecap="round"/>
<path d="M3 12.9 L7.7 8.4 M10.9 5.2 L15.2 0.95" fill="none" stroke="#f2f2f2" stroke-width="1.15"/>
<path d="M10.5 0.8 H15.4 V5.8" fill="none" stroke="#f2f2f2" stroke-width="1.2"/>
<circle cx="1.9" cy="14" r="1.6" fill="none" stroke="#f2f2f2" stroke-width="1.1"/>
</svg>
<div class="field" style="left:429.8px;top:387.9px;width:180.2px;height:20px"></div>
<div class="field" style="left:429.8px;top:411.9px;width:180.2px;height:21.6px"></div>
<div class="abs" style="left:619px;top:293.3px;width:8px;height:8px;background:#6363c7;transform:rotate(45deg);box-shadow:0 0 0 0.8px #151515"></div>
<div class="sock" style="left:413.3px;top:368.8px"></div>
<div class="sock" style="left:413.3px;top:393.8px;background:#598c5c"></div>
<div class="sock" style="left:413.3px;top:418px;background:#598c5c"></div>

<!-- Group Output -->
<div class="node" style="left:663.3px;top:234px;width:156.7px;height:80px">
  <div class="hdr" style="background:#1e1e1e"></div>
</div>
<svg class="abs" style="left:675.3px;top:242.4px;overflow:visible" width="10.6" height="6"><path d="M0.6 0.6 L5.3 5.4 L10.0 0.6" fill="none" stroke="#e6e6e6" stroke-width="1.3" stroke-linecap="round" stroke-linejoin="round"/></svg>

<svg class="abs" style="left:0;top:0;overflow:visible" width="837" height="455">
<path d="M171.6 273 C189.64 273 198.66 355.4 216.7 355.4" fill="none" stroke="#181818" stroke-width="5.6"/><path d="M171.6 273 C189.64 273 198.66 355.4 216.7 355.4" fill="none" stroke="#b4b4b4" stroke-width="4.5"/><path d="M171.6 273 C189.64 273 198.66 355.4 216.7 355.4" fill="none" stroke="#1f1f1f" stroke-width="2.2"/>
<path d="M372.8 272.9 C390.8 272.9 399.8 349 417.8 349" fill="none" stroke="#181818" stroke-width="5.6"/><path d="M372.8 272.9 C390.8 272.9 399.8 349 417.8 349" fill="none" stroke="#b4b4b4" stroke-width="4.5"/><path d="M372.8 272.9 C390.8 272.9 399.8 349 417.8 349" fill="none" stroke="#1f1f1f" stroke-width="2.2"/>
<line x1="623" y1="272.9" x2="663.4" y2="272.9" stroke="#161616" stroke-width="4.2"/><line x1="623" y1="272.9" x2="663.4" y2="272.9" stroke="#00d1a0" stroke-width="2.6"/>
<circle cx="171.6" cy="273" r="4.6" fill="#a1a1a1" stroke="#151515" stroke-width="1.3"/>
<circle cx="216.7" cy="355.4" r="4.6" fill="#a1a1a1" stroke="#151515" stroke-width="1.3"/>
<circle cx="372.8" cy="272.9" r="4.6" fill="#a1a1a1" stroke="#151515" stroke-width="1.3"/>
<circle cx="417.8" cy="349" r="4.6" fill="#a1a1a1" stroke="#151515" stroke-width="1.3"/>
<circle cx="623" cy="272.9" r="4.6" fill="#00d6a3" stroke="#151515" stroke-width="1.3"/>
<circle cx="663.4" cy="272.9" r="4.6" fill="#00d6a3" stroke="#151515" stroke-width="1.3"/>
<circle cx="663.4" cy="297.2" r="4.6" fill="#2e2e2e" stroke="#8c8c8c" stroke-width="1.4"/>
</svg>

<div class="t" style="left:4.45px;top:153px;letter-spacing:-0.133px">View</div><div class="t" style="left:44.55px;top:153px;letter-spacing:-0.240px">Select</div><div class="t" style="left:92.35px;top:153px;letter-spacing:0.175px">Add</div><div class="t" style="left:128.40px;top:153px;letter-spacing:0.150px">Node</div><div class="t" style="left:-8.10px;top:187px;letter-spacing:-0.136px">GeometryNodes</div><div class="t" style="left:132.60px;top:187px;letter-spacing:-0.188px">Geometry Nodes</div><div class="t" style="left:578.60px;top:153px;letter-spacing:-0.188px">Geometry Nodes</div><div class="t" style="left:44.15px;top:238px;letter-spacing:0.613px">Value</div><div class="t" style="left:96.55px;top:266px;letter-spacing:0.488px">Value</div><div class="t" style="left:75.80px;top:296px;letter-spacing:1.137px">1.751</div><div class="t" style="left:245.80px;top:238px;letter-spacing:0.750px">Multiply</div><div class="t" style="left:329.35px;top:266px;letter-spacing:0.588px">Value</div><div class="t" style="left:236.50px;top:296px;letter-spacing:0.821px">Multiply</div><div class="t" style="left:246.60px;top:324px;letter-spacing:0.825px">Clamp</div><div class="t" style="left:229.05px;top:349px;letter-spacing:0.587px">Value</div><div class="t" style="left:246.25px;top:373px;letter-spacing:0.587px">Value</div><div class="t" style="left:311.25px;top:373px;letter-spacing:1.150px">3.100</div><div class="t" style="left:447.10px;top:238px;letter-spacing:0.500px">Grid with Gizmo</div><div class="t" style="left:578.80px;top:266px;letter-spacing:0.850px">Mesh</div><div class="t" style="left:563.80px;top:290px;letter-spacing:0.420px">UV Map</div><div class="t" style="left:472.50px;top:315px;letter-spacing:0.514px">Grid with Gizmo</div><div class="t" style="left:430.05px;top:342px;letter-spacing:0.320px">Size X</div><div class="t" style="left:447.25px;top:366px;letter-spacing:0.250px">Size Y</div><div class="t" style="left:530.80px;top:366px;letter-spacing:0.880px">1.75 m</div><div class="t" style="left:447.75px;top:391px;letter-spacing:0.333px">Vertices X</div><div class="t" style="left:587.65px;top:391px">3</div><div class="t" style="left:447.75px;top:415px;letter-spacing:0.289px">Vertices Y</div><div class="t" style="left:587.65px;top:415px">3</div><div class="t" style="left:691.80px;top:238px;letter-spacing:0.514px">Group Output</div><div class="t" style="left:674.90px;top:266px;letter-spacing:0.550px">Geometry</div>
</body></html>
